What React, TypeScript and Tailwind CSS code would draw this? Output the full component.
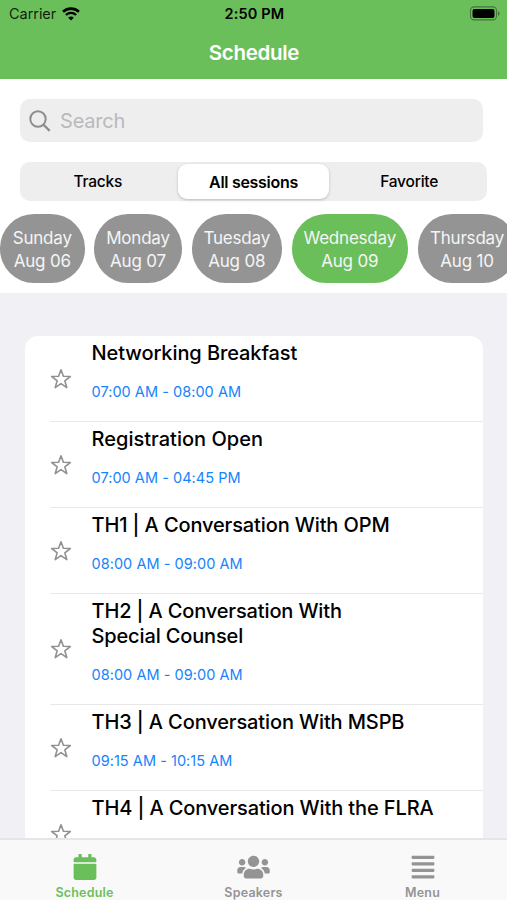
import { FaAlignJustify, FaCalendar, FaUsers } from "react-icons/fa";

const days = [
  { day: "Sunday", date: "Aug 06", width: "w-[84.5px]" },
  { day: "Monday", date: "Aug 07", width: "w-[88px]" },
  { day: "Tuesday", date: "Aug 08", width: "w-[90.5px]" },
  { day: "Wednesday", date: "Aug 09", width: "w-[116.5px]", active: true },
  { day: "Thursday", date: "Aug 10", width: "w-[99px]" },
];

const sessions = [
  { title: "Networking Breakfast", time: "07:00 AM - 08:00 AM", style: "tracking-[-0.09px]" },
  { title: "Registration Open", time: "07:00 AM - 04:45 PM", style: "tracking-[0.02px]" },
  { title: "TH1 | A Conversation With OPM", time: "08:00 AM - 09:00 AM", style: "tracking-[-0.12px]" },
  { title: "TH2 | A Conversation With Special Counsel", time: "08:00 AM - 09:00 AM", style: "tracking-[-0.14px] max-w-[300px]" },
  { title: "TH3 | A Conversation With MSPB", time: "09:15 AM - 10:15 AM", style: "tracking-[-0.12px]" },
  { title: "TH4 | A Conversation With the FLRA", time: "", style: "tracking-[-0.12px]" },
];

function StatusBar() {
  return (
    <div className="grid h-[27px] grid-cols-3 items-center pl-[9px] pr-[7px] text-black">
      <div className="flex items-center gap-[6px]">
        <span className="text-[14.5px] tracking-[-0.05px] text-black/85">Carrier</span>
        <svg width="18" height="14" viewBox="0 0 18 14" fill="none" stroke="currentColor">
          <path d="M1 4.7C5.6.6 12.4.6 17 4.7" strokeWidth="2.6" />
          <path d="M3.9 8C6.8 5.2 11.2 5.2 14.1 8" strokeWidth="2.4" />
          <path d="M9 13.6L6.2 10.7C7.8 9.2 10.2 9.2 11.8 10.7Z" fill="currentColor" stroke="none" />
        </svg>
      </div>
      <span className="text-center text-[14.5px] font-semibold tracking-[0.15px]">2:50 PM</span>
      <svg className="justify-self-end" width="31" height="15" viewBox="0 0 31 15">
        <rect x="1.5" y="0.9" width="26" height="13" rx="3.6" fill="none" stroke="#000" strokeOpacity=".38" strokeWidth="1.1" />
        <rect x="3.5" y="2.9" width="22" height="9" rx="2" />
        <path d="M29 5.2c2.1.9 2.1 3.7 0 4.6z" opacity=".42" />
      </svg>
    </div>
  );
}

function Star() {
  return (
    <svg className="shrink-0" width="22" height="22" viewBox="0 0 22 22" fill="none" stroke="#919191" strokeWidth="1.6" strokeLinejoin="round">
      <path d="M11 1.7L13.4 8.3L20.3 8.5L14.8 12.8L16.8 19.6L11 15.6L5.2 19.6L7.2 12.8L1.7 8.5L8.6 8.3Z" />
    </svg>
  );
}

export default function App() {
  return (
    <div className="flex h-[900px] w-[507px] flex-col overflow-hidden bg-[#f0f0f5] font-['Inter',sans-serif]">
      <header className="h-[79px] shrink-0 bg-[#6abf5b]">
        <StatusBar />
        <h1 className="pt-px pl-px text-center text-[20.5px] leading-[50px] font-semibold tracking-[-0.3px] text-white">
          Schedule
        </h1>
      </header>

      <section className="h-[214px] shrink-0 bg-white pt-[20px]">
        <div className="ml-5 flex h-[43px] w-[463px] items-center gap-[9px] rounded-[10px] bg-[#eeeeee] pl-[9px]">
          <svg width="22" height="22" viewBox="0 0 22 22" fill="none" stroke="#8e8e8e" strokeWidth="2">
            <circle cx="9" cy="9" r="7.7" />
            <path d="M14.4 14.6L20.7 20.9" strokeWidth="2.3" />
          </svg>
          <span className="pt-px text-[20px] tracking-[-0.2px] text-[#b9b9bb]">Search</span>
        </div>

        <div className="mt-[20px] ml-5 grid h-[39px] w-[467px] grid-cols-3 items-center rounded-[10px] bg-[#eeeeee] text-center text-[15.5px] font-medium tracking-[-0.2px] text-black">
          <span className="pt-px">Tracks</span>
          <span className="mx-[2px] flex h-[35px] items-center justify-center rounded-[9px] bg-white text-[16px] font-semibold tracking-[-0.3px] shadow-[0_1px_3px_rgba(0,0,0,0.22)]">
            All sessions
          </span>
          <span className="pt-px">Favorite</span>
        </div>

        <div className="mt-[13px] flex gap-[9.5px] overflow-hidden">
          {days.map((d) => (
            <div
              key={d.day}
              className={`${d.width} ${d.active ? "bg-[#6abf5b]" : "bg-[#949494]"} flex h-[69px] shrink-0 flex-col items-center justify-center rounded-[34px] pt-[2px] text-[17px] leading-[23px] tracking-[-0.2px] whitespace-nowrap text-[#f5f5f5]`}
            >
              <span>{d.day}</span>
              <span>{d.date}</span>
            </div>
          ))}
        </div>
      </section>

      <main className="min-h-0 flex-1 overflow-hidden pt-[43px] pl-[25px]">
        <ul className="w-[458px] rounded-t-[13px] bg-white pl-[25px]">
          {sessions.map((s) => (
            <li key={s.title} className="flex items-center border-b border-[#e8e8ea]">
              <Star />
              <div className="ml-[19.5px] w-[370px] pt-[5px] pb-[20px]">
                <h2 className={`${s.style} text-[20px] leading-[25px] font-medium text-black`}>{s.title}</h2>
                <p className="mt-[16px] h-[19px] text-[14.5px] leading-[19px] tracking-[0.04px] text-[#1684fb]">{s.time}</p>
              </div>
            </li>
          ))}
        </ul>
      </main>

      <nav className="grid h-[62px] shrink-0 grid-cols-3 border-t-2 border-[#e5e5e8] bg-[#f9f9f9] text-[12.5px] font-semibold text-[#949494]">
        <div className="flex flex-col items-center pt-[14px] text-[#6abf5b]">
          <FaCalendar size={26} />
          <span className="mt-[4px] leading-[18px] tracking-[0.2px]">Schedule</span>
        </div>
        <div className="flex flex-col items-center pt-[14px]">
          <FaUsers className="h-[26px] w-[33px]" />
          <span className="mt-[4px] leading-[18px] tracking-[0.2px]">Speakers</span>
        </div>
        <div className="flex flex-col items-center pt-[14px]">
          <FaAlignJustify size={26} />
          <span className="mt-[4px] leading-[18px] tracking-[0.2px]">Menu</span>
        </div>
      </nav>
    </div>
  );
}
